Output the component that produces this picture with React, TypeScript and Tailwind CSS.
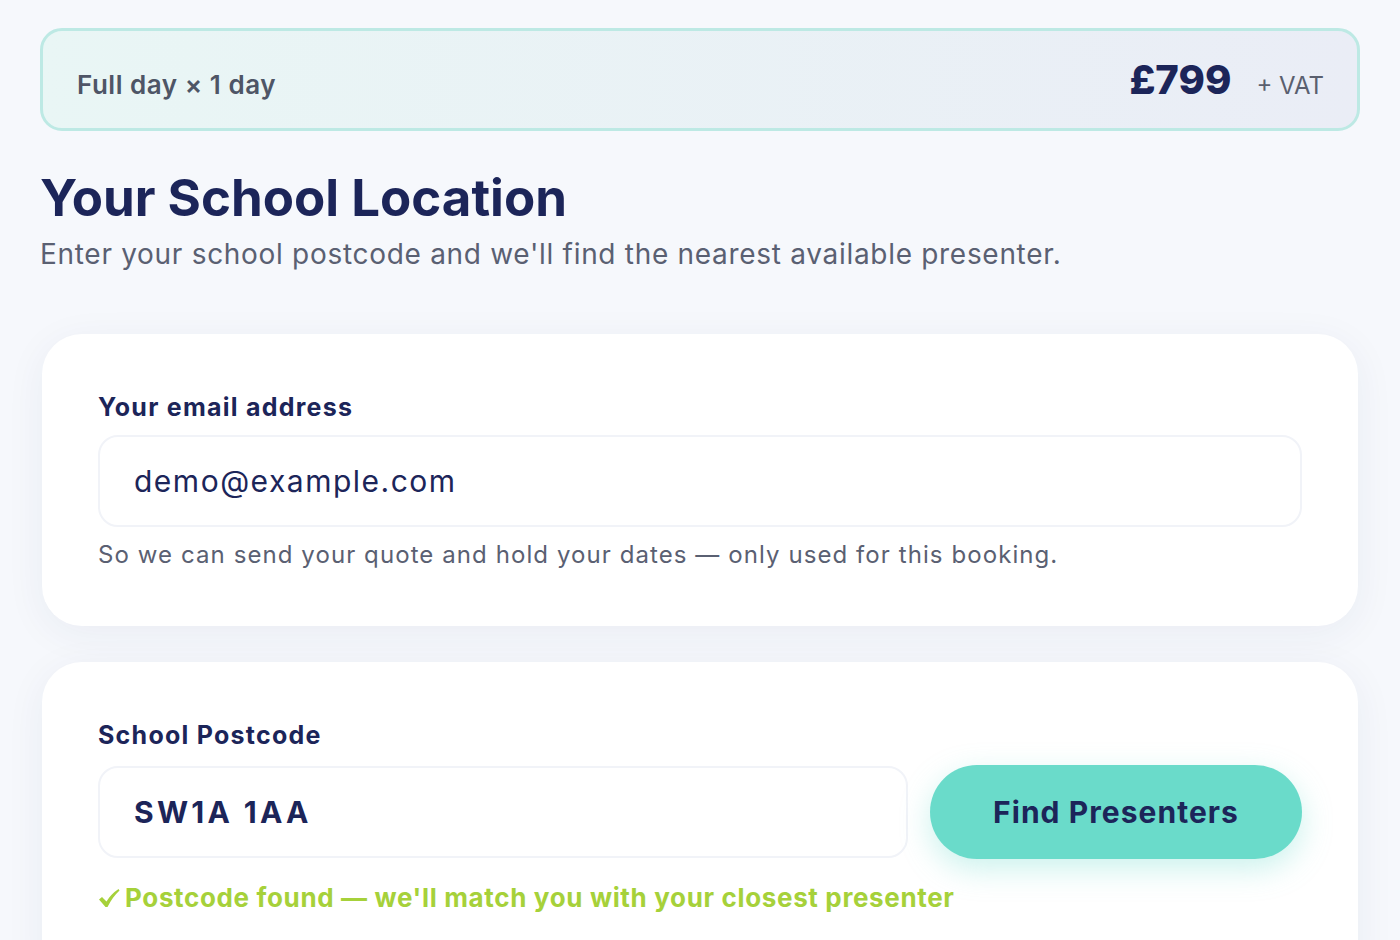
import React from "react";

const font = { fontFamily: "Inter, 'Noto Sans', sans-serif" };

export default function App() {
  return (
    <div
      className="min-h-[940px] w-full bg-[#f6f8fc] px-10 pt-7 pb-20 text-[#1c2559]"
      style={font}
    >
      {/* Price summary banner */}
      <div className="flex h-[103px] items-center justify-between rounded-[22px] border-[3px] border-[#bde9e4] bg-gradient-to-r from-[#e9f6f5] to-[#eaedf6] pl-[34px] pr-[33px]">
        <span className="pt-[10px] text-[26px] font-semibold tracking-[0.02em] text-[#4e5566]">
          Full day × 1 day
        </span>
        <div className="flex items-baseline gap-[25px]">
          <span className="text-[40px] font-extrabold text-[#1c2559]">£799</span>
          <span className="text-[24px] text-[#5a5f6e]">+ VAT</span>
        </div>
      </div>

      {/* Heading */}
      <h1 className="mt-[38px] text-[51px] font-bold leading-[58px] text-[#1c2559]">
        Your School Location
      </h1>
      <p className="mt-[7px] text-[28px] leading-[40px] tracking-[0.025em] text-[#5a6072]">
        Enter your school postcode and we'll find the nearest available presenter.
      </p>

      {/* Email card */}
      <section className="mx-[2px] mt-[60px] rounded-[40px] bg-white px-14 pt-[57px] pb-[55px] shadow-[0_8px_40px_rgba(40,50,100,0.06)]">
        <label className="block text-[25px] font-bold leading-[32px] tracking-[0.05em] text-[#1c2559]">
          Your email address
        </label>
        <div className="mt-[12px] flex h-[92px] items-center rounded-[20px] border-2 border-[#f1f3f8] px-[34px] text-[30px] tracking-[0.05em] text-[#1c2559]">
          demo@example.com
        </div>
        <p className="mt-[12px] text-[24px] leading-[32px] tracking-[0.045em] text-[#5a6072]">
          So we can send your quote and hold your dates — only used for this booking.
        </p>
      </section>

      {/* Postcode card */}
      <section className="mx-[2px] mt-[36px] rounded-[40px] bg-white px-14 pt-[57px] pb-[80px] shadow-[0_8px_40px_rgba(40,50,100,0.06)]">
        <label className="block text-[25px] font-bold leading-[32px] tracking-[0.05em] text-[#1c2559]">
          School Postcode
        </label>
        <div className="mt-[14px] flex items-center gap-[22px]">
          <div className="flex h-[92px] flex-1 items-center rounded-[20px] border-2 border-[#f1f3f8] px-[34px] text-[30px] font-bold tracking-[0.11em] text-[#1c2559]">
            SW1A 1AA
          </div>
          <button className="h-[94px] w-[372px] rounded-full bg-[#6adbca] text-[30px] font-bold tracking-[0.035em] text-[#1c2559] shadow-[0_10px_30px_rgba(106,219,202,0.35)]">
            Find Presenters
          </button>
        </div>
        <p className="mt-[23px] flex items-center text-[26px] font-bold leading-[32px] tracking-[0.025em] text-[#a6d13a]">
          {/* heavy check mark */}
          <svg width="22" height="20" viewBox="0 0 22 20" className="mr-[5px] shrink-0">
            <path
              d="M1 11.5 L4 9 L8.5 13.5 Q13 6 20.5 1 L21.5 2.5 Q14.5 9 9.5 19 L7.5 19 Z"
              fill="#a6d13a"
            />
          </svg>
          Postcode found — we'll match you with your closest presenter
        </p>
      </section>
    </div>
  );
}
